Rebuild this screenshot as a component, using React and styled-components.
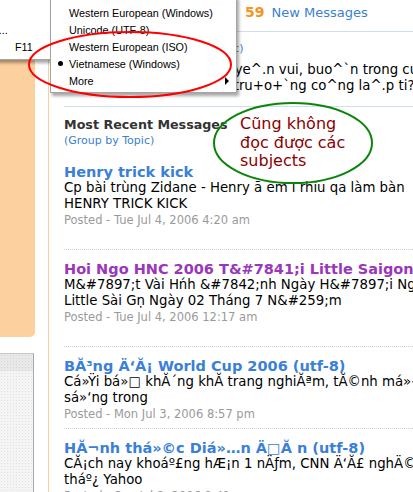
import React from 'react';
import styled, { createGlobalStyle } from 'styled-components';

const GlobalStyle = createGlobalStyle`
  html, body {
    margin: 0;
    padding: 0;
    background: #fff;
    overflow: hidden;
  }
  body {
    font-family: "DejaVu Sans", Verdana, sans-serif;
    color: #000;
  }
`;

const Page = styled.div`
  position: relative;
  display: flex;
  width: 413px;
  height: 492px;
  overflow: hidden;
`;

const Sidebar = styled.aside`
  display: flex;
  flex-direction: column;
  flex-shrink: 0;
  width: 48px;
  border-right: 1px solid #fdcf9f;
`;

const PeachPanel = styled.div`
  width: 35px;
  height: 337px;
  background: #fdd09f;
  border-bottom-right-radius: 5px;
`;

const ToolBox = styled.div`
  flex: 1;
  width: 33px;
  margin-top: 16px;
  border-top: 1px solid #c8c8c8;
  border-right: 1px solid #a9a9a9;
  background-color: #f4f4f4;
  background-image: radial-gradient(#e2e2e2 0.6px, transparent 0.9px);
  background-size: 3px 3px;
`;

const ToolBoxHead = styled.div`
  height: 17px;
  background-color: #e8e8e8;
  background-image: radial-gradient(#d6d6d6 0.6px, transparent 0.9px);
  background-size: 3px 3px;
`;

const Main = styled.main`
  flex: 1;
  min-width: 0;
  padding-left: 15px;
  white-space: nowrap;
`;

const Header = styled.div`
  padding: 4px 0 10px 181px;
  font-size: 13px;
  line-height: 16px;
  border-bottom: 1px solid #cddff1;
`;

const Count = styled.span`
  font-size: 14px;
  font-weight: bold;
  color: #f7941e;
`;

const HeaderLink = styled.span`
  margin-left: 7px;
  color: #3a7fd0;
`;

const Block = styled.section`
  padding: ${p => p.$pad || '10px 0 0'};
  border-bottom: ${p => (p.$ruled ? '1px solid #cddff1' : 'none')};
`;

const Heading = styled.div`
  font-size: 12.7px;
  line-height: 16px;
  font-weight: bold;
  color: #333;
`;

const SmallLink = styled.div`
  font-size: 11px;
  line-height: 16px;
  color: #3a7fd0;
`;

const Label = styled.span`
  color: #333;
`;

const Body = styled.div`
  margin-top: ${p => p.$gap || 0}px;
  font-size: 13.3px;
  line-height: 16px;
  color: #000;
`;

const PostList = styled.div`
  margin-top: 4px;
`;

const Post = styled.article`
  padding: 11px 0 ${p => p.$tail || 6}px;
  border-bottom: 1px dotted #cfcfcf;
`;

const PostTitle = styled.div`
  font-size: 14.5px;
  line-height: 16px;
  font-weight: bold;
  color: ${p => p.$color};
`;

const Posted = styled.div`
  font-size: 11.5px;
  line-height: 16px;
  color: #9a9a9a;
`;

/* dropdown menus floating over the page */
const Menu = styled.div`
  position: absolute;
  top: ${p => p.$top}px;
  left: ${p => p.$left}px;
  width: ${p => p.$width}px;
  padding: ${p => p.$pad};
  background: #fff;
  border: 1px solid #a4a4a4;
  box-shadow: 2px 3px 3px rgba(0, 0, 0, 0.35);
  font-family: "Liberation Sans", Arial, sans-serif;
  font-size: 10.8px;
  color: #000;
  z-index: ${p => p.$z};
`;

const MenuRow = styled.div`
  display: flex;
  align-items: center;
  height: 17px;
  white-space: nowrap;
`;

const Check = styled.span`
  display: flex;
  justify-content: center;
  align-items: center;
  width: ${p => p.$w}px;
  flex-shrink: 0;
`;

const Dot = styled.span`
  width: 5px;
  height: 5px;
  border-radius: 50%;
  background: #000;
`;

const MenuText = styled.span`
  flex: 1;
`;

const Shortcut = styled.span`
  width: 41px;
  flex-shrink: 0;
`;

const SubArrow = styled.span`
  width: 0;
  height: 0;
  margin-right: 7px;
  border-left: 4px solid #000;
  border-top: 4px solid transparent;
  border-bottom: 4px solid transparent;
`;

const Notes = styled.svg`
  position: absolute;
  left: 0;
  top: 0;
  pointer-events: none;
  z-index: 5;
`;

const NoteText = styled.div`
  position: absolute;
  left: 240px;
  top: 115px;
  font-size: 16px;
  line-height: 18.5px;
  color: #8b0000;
  z-index: 4;
`;

const BLUE = '#3a80d8';
const PURPLE = '#9b36bb';

const posts = [
  {
    title: 'Henry trick kick',
    color: BLUE,
    lines: ['Cp bài trùng Zidane - Henry ā ēm ī rhiu qa làm bàn', 'HENRY TRICK KICK'],
    posted: 'Tue Jul 4, 2006 4:20 am',
    tail: 21,
  },
  {
    title: 'Hoi Ngo HNC 2006 T&#7841;i Little Saigon',
    color: PURPLE,
    lines: [
      'M&#7897;t Vài Hńh &#7842;nh Ngày H&#7897;i Ng&#7897;',
      'Little Sài Gṇ Ngày 02 Tháng 7 N&#259;m',
    ],
    posted: 'Tue Jul 4, 2006 12:17 am',
    tail: 21,
  },
  {
    title: 'BĂ³ng Ä‘Ă¡ World Cup 2006 (utf-8)',
    color: BLUE,
    lines: ['Cá»Ÿi bá»□ khĂ´ng khĂ trang nghiĂªm, tĂ©nh má»‹ch', 'sá»‘ng trong'],
    posted: 'Mon Jul 3, 2006 8:57 pm',
  },
  {
    title: 'HĂ¬nh thá»©c Diá»…n Ä□Ă n (utf-8)',
    color: BLUE,
    lines: ['CĂ¡ch nay khoáº£ng hÆ¡n 1 nÄƒm, CNN Ä‘Ă£ nghÄ©', 'tháº¿ Yahoo'],
    posted: 'Sun Jul 2, 2006 9:41 pm',
  },
];

const encodings = [
  { label: 'Western European (Windows)' },
  { label: 'Unicode (UTF-8)' },
  { label: 'Western European (ISO)' },
  { label: 'Vietnamese (Windows)', checked: true },
  { label: 'More', more: true },
];

export default function App() {
  return (
    <Page>
      <GlobalStyle />
      <Sidebar>
        <PeachPanel />
        <ToolBox>
          <ToolBoxHead />
        </ToolBox>
      </Sidebar>

      <Main>
        <Header>
          <Count>59</Count>
          <HeaderLink>New Messages</HeaderLink>
        </Header>

        <Block $pad="9px 0 12px" $ruled>
          <SmallLink>
            <Label>Recent Threads </Label>(Group by Topic)
          </SmallLink>
          <Body $gap={5}>
            Ke^? nhu+~ng ca^u chuye^.n vui, buo^`n trong cuo^.c so^'ng
            <br />
            cu?a mo.i ba.n ho.c sinh, tru+o+`ng co^ng la^.p ti?nh le^?
          </Body>
        </Block>

        <Block>
          <Heading>Most Recent Messages</Heading>
          <SmallLink>(Group by Topic)</SmallLink>
          <PostList>
            {posts.map(post => (
              <Post key={post.title} $tail={post.tail}>
                <PostTitle $color={post.color}>{post.title}</PostTitle>
                <Body>
                  {post.lines[0]}
                  <br />
                  {post.lines[1]}
                </Body>
                <Posted>Posted - {post.posted}</Posted>
              </Post>
            ))}
          </PostList>
        </Block>
      </Main>

      <Menu $top={-1} $left={-93} $width={148} $pad="4px 0" $z={1}>
        <MenuRow>
          <Check $w={20} />
          <MenuText>Encoding</MenuText>
          <Shortcut />
        </MenuRow>
        <MenuRow>
          <Check $w={20} />
          <MenuText>Privacy Report...</MenuText>
          <Shortcut />
        </MenuRow>
        <MenuRow>
          <Check $w={20} />
          <MenuText>Full Screen</MenuText>
          <Shortcut>F11</Shortcut>
        </MenuRow>
      </Menu>

      <Menu $top={-4} $left={50} $width={185} $pad="7px 0 3px" $z={2}>
        {encodings.map(item => (
          <MenuRow key={item.label}>
            <Check $w={18}>{item.checked && <Dot />}</Check>
            <MenuText>{item.label}</MenuText>
            {item.more && <SubArrow />}
          </MenuRow>
        ))}
      </Menu>

      <Notes width="413" height="492" viewBox="0 0 413 492">
        <ellipse cx="130" cy="64.5" rx="101" ry="32.5" fill="none" stroke="#f00" strokeWidth="2" />
        <ellipse cx="293" cy="143" rx="79" ry="40" fill="none" stroke="#0a850a" strokeWidth="2" />
      </Notes>
      <NoteText>
        Cũng không
        <br />
        đọc được các
        <br />
        subjects
      </NoteText>
    </Page>
  );
}
